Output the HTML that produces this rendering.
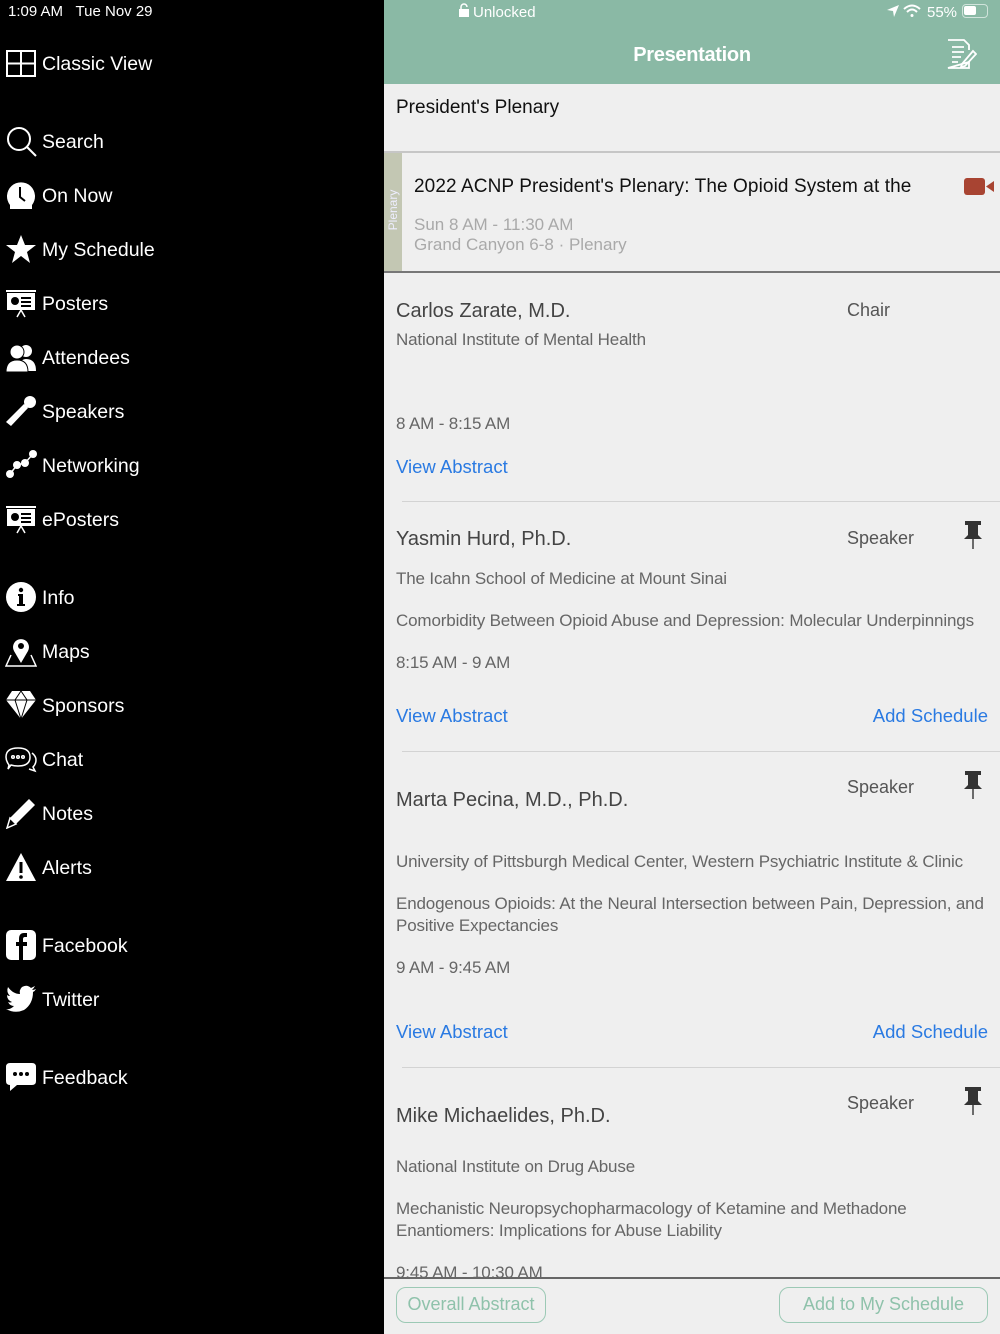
<!DOCTYPE html>
<html><head><meta charset="utf-8"><style>
*{margin:0;padding:0;box-sizing:border-box}
body{width:1000px;height:1334px;position:relative;overflow:hidden;font-family:"Liberation Sans",sans-serif;background:#efefef}
#side{position:absolute;left:0;top:0;width:384px;height:1334px;background:#000;color:#fff}
.t{position:absolute;white-space:nowrap;line-height:24px}
.s{left:42px;font-size:19.5px;color:#fff}
.ic{position:absolute;left:5px;width:32px;height:32px}
#main{position:absolute;left:384px;top:0;width:616px;height:1334px;background:#efefef;overflow:hidden}
.nm{left:12px;font-size:20px;color:#444}
.org{left:12px;font-size:17px;color:#666;letter-spacing:-0.15px}
.lk{font-size:18.5px;color:#2a7ae2}
.role{left:463px;font-size:18px;color:#555}
.sep{position:absolute;left:18px;right:0;height:1px;background:#d3d3d3}
.pin{position:absolute;left:578px;width:22px;height:30px}
.btn{position:absolute;border:1.5px solid #9cc9b5;border-radius:10px;color:#8fc2ab;font-size:18px;text-align:center;line-height:32px;background:#efefef}
</style></head><body>
<div id="side">
<div class="t" style="left:8px;top:2px;font-size:15px;line-height:20px">1:09 AM&nbsp;&nbsp;&nbsp;Tue Nov 29</div>

<svg class="ic" style="top:48px" viewBox="0 0 32 32" fill="none" stroke="#fff" stroke-width="2"><rect x="2" y="3" width="28" height="25"/><line x1="16" y1="3" x2="16" y2="28"/><line x1="2" y1="15.5" x2="30" y2="15.5"/></svg>
<div class="t s" style="top:52px">Classic View</div>

<svg class="ic" style="top:125px" viewBox="0 0 32 32" fill="none" stroke="#fff" stroke-width="2"><circle cx="14" cy="14" r="11"/><line x1="22" y1="22" x2="31" y2="31"/></svg>
<div class="t s" style="top:130px">Search</div>

<svg class="ic" style="top:179px" viewBox="0 0 32 32"><path d="M5 30 L5 26 A14 14 0 1 1 27 26 L27 30 Z" fill="#fff"/><path d="M15 8 V18 L20 22" stroke="#000" stroke-width="2" fill="none"/></svg>
<div class="t s" style="top:184px">On Now</div>

<svg class="ic" style="top:233px" viewBox="0 0 32 32"><path d="M16 2 L20 12 L31 12 L22 19 L25 30 L16 23 L7 30 L10 19 L1 12 L12 12Z" fill="#fff"/></svg>
<div class="t s" style="top:238px">My Schedule</div>

<svg class="ic" style="top:287px" viewBox="0 0 32 32"><rect x="1" y="3" width="30" height="2" fill="#fff"/><rect x="2" y="6" width="28" height="17" fill="#fff"/><circle cx="10" cy="14" r="4" fill="#000"/><rect x="16" y="10" width="10" height="2" fill="#000"/><rect x="16" y="14" width="10" height="2" fill="#000"/><rect x="16" y="18" width="10" height="2" fill="#000"/><path d="M16 23 L12 30 M16 23 L20 30" stroke="#fff" stroke-width="1.5"/></svg>
<div class="t s" style="top:292px">Posters</div>

<svg class="ic" style="top:341px" viewBox="0 0 32 32" fill="#fff"><circle cx="21" cy="10" r="6"/><path d="M14 30 Q14 18 21 18 Q31 18 31 30Z"/><circle cx="12" cy="11" r="7" stroke="#000" stroke-width="1"/><path d="M1 31 Q1 19 12 19 Q23 19 23 31Z" stroke="#000" stroke-width="1"/></svg>
<div class="t s" style="top:346px">Attendees</div>

<svg class="ic" style="top:395px" viewBox="0 0 32 32" fill="#fff"><circle cx="25" cy="7" r="6"/><path d="M19 9 L23 13 L6 31 L1 27Z"/></svg>
<div class="t s" style="top:400px">Speakers</div>

<svg class="ic" style="top:449px" viewBox="0 0 32 32" fill="#fff"><circle cx="28" cy="5" r="4"/><circle cx="20" cy="14" r="4"/><circle cx="12" cy="16" r="4"/><circle cx="5" cy="25" r="4"/><path d="M5 25 L12 16 L20 14 L28 5" stroke="#fff" stroke-width="1.5" fill="none"/></svg>
<div class="t s" style="top:454px">Networking</div>

<svg class="ic" style="top:503px" viewBox="0 0 32 32"><rect x="1" y="3" width="30" height="2" fill="#fff"/><rect x="2" y="6" width="28" height="17" fill="#fff"/><circle cx="10" cy="14" r="4" fill="#000"/><rect x="16" y="10" width="10" height="2" fill="#000"/><rect x="16" y="14" width="10" height="2" fill="#000"/><rect x="16" y="18" width="10" height="2" fill="#000"/><path d="M16 23 L12 30 M16 23 L20 30" stroke="#fff" stroke-width="1.5"/></svg>
<div class="t s" style="top:508px">ePosters</div>

<svg class="ic" style="top:581px" viewBox="0 0 32 32"><circle cx="16" cy="16" r="15" fill="#fff"/><circle cx="16" cy="9" r="2.2" fill="#000"/><path d="M13 13 H18 V23 H20 V25 H12 V23 H14 V15 H13Z" fill="#000"/></svg>
<div class="t s" style="top:586px">Info</div>

<svg class="ic" style="top:635px" viewBox="0 0 32 32"><path d="M6 20 L1 31 L31 31 L26 20" stroke="#fff" stroke-width="1.5" fill="none"/><path d="M16 28 L9 16 A8 8 0 1 1 23 16Z" fill="#fff"/><circle cx="16" cy="11" r="3" fill="#000"/></svg>
<div class="t s" style="top:640px">Maps</div>

<svg class="ic" style="top:689px" viewBox="0 0 32 32"><path d="M7 2 H25 L31 11 L16 30 L1 11Z" fill="#fff"/><path d="M1 11 H31 M10 11 L16 30 L22 11 L16 2 L10 11" stroke="#000" stroke-width="1" fill="none"/></svg>
<div class="t s" style="top:694px">Sponsors</div>

<svg class="ic" style="top:743px" viewBox="0 0 32 32" fill="none" stroke="#fff" stroke-width="1.5"><path d="M4 22 Q1 18 1 14 Q1 5 13 5 Q25 5 25 14 Q25 23 13 23 Q9 23 6 22 L3 26Z"/><path d="M27 10 Q31 13 31 17 Q31 21 28 24 L30 28 L24 26"/><circle cx="8" cy="14" r="1.3"/><circle cx="13" cy="14" r="1.3"/><circle cx="18" cy="14" r="1.3"/></svg>
<div class="t s" style="top:748px">Chat</div>

<svg class="ic" style="top:797px" viewBox="0 0 32 32"><path d="M24 2 L30 8 L11 27 L5 21Z" fill="#fff"/><path d="M5 21 L11 27 L2 31Z" fill="none" stroke="#fff" stroke-width="1.5"/></svg>
<div class="t s" style="top:802px">Notes</div>

<svg class="ic" style="top:851px" viewBox="0 0 32 32"><path d="M16 2 L31 30 L1 30Z" fill="#fff"/><rect x="14.5" y="11" width="3" height="11" fill="#000"/><circle cx="16" cy="26" r="1.8" fill="#000"/></svg>
<div class="t s" style="top:856px">Alerts</div>

<svg class="ic" style="top:929px" viewBox="0 0 32 32"><rect x="1" y="1" width="30" height="30" rx="5" fill="#fff"/><path d="M18 31 V17 H22 V13 H18 V10 Q18 8 20 8 H22 V4 H19 Q14 4 14 10 V13 H11 V17 H14 V31Z" fill="#000"/></svg>
<div class="t s" style="top:934px">Facebook</div>

<svg class="ic" style="top:983px" viewBox="0 0 32 32"><path d="M31 6 Q29 7 27 7 Q29 5 30 3 Q28 4 26 5 Q22 1 17 4 Q14 7 15 11 Q8 11 3 4 Q1 9 5 13 Q3 13 2 12 Q2 17 7 19 Q5 20 3 19 Q5 23 9 23 Q5 27 1 26 Q10 31 19 27 Q28 21 28 9 Q30 8 31 6Z" fill="#fff"/></svg>
<div class="t s" style="top:988px">Twitter</div>

<svg class="ic" style="top:1061px" viewBox="0 0 32 32"><path d="M5 2 H27 Q31 2 31 6 V20 Q31 24 27 24 H12 L5 30 V24 Q1 24 1 20 V6 Q1 2 5 2Z" fill="#fff"/><circle cx="10" cy="13" r="2" fill="#000"/><circle cx="16" cy="13" r="2" fill="#000"/><circle cx="22" cy="13" r="2" fill="#000"/></svg>
<div class="t s" style="top:1066px">Feedback</div>
</div>

<div id="main">
<div style="position:absolute;left:0;top:0;width:616px;height:84px;background:#8ab9a5"></div>
<svg style="position:absolute;left:75px;top:3px" width="10" height="14" viewBox="0 0 10 14"><rect x="0" y="6" width="10" height="8" fill="#fff"/><path d="M2 6 V4 A3 3 0 0 1 8 4" stroke="#fff" stroke-width="1.5" fill="none"/></svg>
<div class="t" style="left:89px;top:2px;font-size:15px;line-height:22px;color:#fff">Unlocked</div>
<svg style="position:absolute;left:502px;top:4px" width="14" height="14" viewBox="0 0 14 14"><path d="M13 1 L1 6 L7 7 L8 13Z" fill="#fff"/></svg>
<svg style="position:absolute;left:519px;top:4px" width="18" height="14" viewBox="0 0 18 14" fill="none" stroke="#fff" stroke-width="2"><path d="M1 5 Q9 -2 17 5"/><path d="M4 8 Q9 3 14 8"/><circle cx="9" cy="11.5" r="1.5" fill="#fff" stroke="none"/></svg>
<div class="t" style="left:543px;top:2px;font-size:15px;line-height:22px;color:#fff">55%</div>
<div style="position:absolute;left:578px;top:4px;width:26px;height:14px;border:1.5px solid rgba(255,255,255,.6);border-radius:4px"><div style="position:absolute;left:1px;top:1px;width:12px;height:9px;background:#fff;border-radius:2px"></div></div>
<div class="t" style="left:0;width:616px;text-align:center;top:43px;font-size:20px;color:#fff;font-weight:bold;letter-spacing:-0.3px">Presentation</div>
<svg style="position:absolute;left:561px;top:38px" width="32" height="32" viewBox="0 0 32 32" fill="none" stroke="#fff" stroke-width="1.8"><path d="M3 2 H19 L24 7 V12 M24 24 V30 H3Z"/><path d="M7 9 H19 M7 14 H19 M7 19 H16 M7 24 H13"/><path d="M17 26 L28 13 L31 16 L20 28 L16 29Z"/></svg>

<div class="t" style="left:12px;top:96px;font-size:19px;color:#111">President's Plenary</div>
<div style="position:absolute;left:0;top:151px;width:616px;height:2px;background:#c6c6c6"></div>
<div style="position:absolute;left:0;top:153px;width:18px;height:119px;background:#c3c7b3"></div>
<div class="t" style="left:-22px;top:202px;width:62px;text-align:center;transform:rotate(-90deg);font-size:12px;line-height:16px;color:#eef">Plenary</div>
<div class="t" style="left:30px;top:175px;font-size:19px;color:#111;letter-spacing:0.1px">2022 ACNP President's Plenary: The Opioid System at the</div>
<svg style="position:absolute;left:580px;top:178px" width="30" height="17" viewBox="0 0 30 17"><rect x="0" y="0" width="21" height="17" rx="3" fill="#a84432"/><path d="M22 8.5 L30 3 V14Z" fill="#a84432"/></svg>
<div class="t" style="left:30px;top:213px;font-size:17px;color:#a9a9a9">Sun 8 AM - 11:30 AM</div>
<div class="t" style="left:30px;top:233px;font-size:17px;color:#a9a9a9">Grand Canyon 6-8 · Plenary</div>
<div style="position:absolute;left:0;top:271px;width:616px;height:2px;background:#777"></div>

<div class="t nm" style="top:299px">Carlos Zarate, M.D.</div>
<div class="t role" style="top:298px">Chair</div>
<div class="t org" style="top:328px">National Institute of Mental Health</div>
<div class="t org" style="top:412px">8 AM - 8:15 AM</div>
<div class="t lk" style="left:12px;top:455px">View Abstract</div>
<div class="sep" style="top:501px"></div>

<div class="t nm" style="top:527px">Yasmin Hurd, Ph.D.</div>
<div class="t role" style="top:526px">Speaker</div>
<svg class="pin" style="top:520px" viewBox="0 0 22 30"><rect x="3" y="1" width="16" height="4" fill="#333"/><path d="M6 5 H16 V15 L20 19 H2 L6 15Z" fill="#333"/><rect x="10.3" y="19" width="1.4" height="10" fill="#333"/></svg>
<div class="t org" style="top:567px">The Icahn School of Medicine at Mount Sinai</div>
<div class="t org" style="top:609px">Comorbidity Between Opioid Abuse and Depression: Molecular Underpinnings</div>
<div class="t org" style="top:651px">8:15 AM - 9 AM</div>
<div class="t lk" style="left:12px;top:704px">View Abstract</div>
<div class="t lk" style="right:12px;top:704px">Add Schedule</div>
<div class="sep" style="top:751px"></div>

<div class="t nm" style="top:788px">Marta Pecina, M.D., Ph.D.</div>
<div class="t role" style="top:775px">Speaker</div>
<svg class="pin" style="top:770px" viewBox="0 0 22 30"><rect x="3" y="1" width="16" height="4" fill="#333"/><path d="M6 5 H16 V15 L20 19 H2 L6 15Z" fill="#333"/><rect x="10.3" y="19" width="1.4" height="10" fill="#333"/></svg>
<div class="t org" style="top:850px">University of Pittsburgh Medical Center, Western Psychiatric Institute &amp; Clinic</div>
<div class="t org" style="top:892px">Endogenous Opioids: At the Neural Intersection between Pain, Depression, and</div>
<div class="t org" style="top:914px">Positive Expectancies</div>
<div class="t org" style="top:956px">9 AM - 9:45 AM</div>
<div class="t lk" style="left:12px;top:1020px">View Abstract</div>
<div class="t lk" style="right:12px;top:1020px">Add Schedule</div>
<div class="sep" style="top:1067px"></div>

<div class="t nm" style="top:1104px">Mike Michaelides, Ph.D.</div>
<div class="t role" style="top:1091px">Speaker</div>
<svg class="pin" style="top:1086px" viewBox="0 0 22 30"><rect x="3" y="1" width="16" height="4" fill="#333"/><path d="M6 5 H16 V15 L20 19 H2 L6 15Z" fill="#333"/><rect x="10.3" y="19" width="1.4" height="10" fill="#333"/></svg>
<div class="t org" style="top:1155px">National Institute on Drug Abuse</div>
<div class="t org" style="top:1197px">Mechanistic Neuropsychopharmacology of Ketamine and Methadone</div>
<div class="t org" style="top:1219px">Enantiomers: Implications for Abuse Liability</div>
<div class="t org" style="top:1261px">9:45 AM - 10:30 AM</div>

<div style="position:absolute;left:0;top:1277px;width:616px;height:57px;background:#efefef;border-top:2px solid #666"></div>
<div class="btn" style="left:12px;top:1287px;width:150px;height:36px">Overall Abstract</div>
<div class="btn" style="left:395px;top:1287px;width:209px;height:36px">Add to My Schedule</div>
</div>
</body></html>
